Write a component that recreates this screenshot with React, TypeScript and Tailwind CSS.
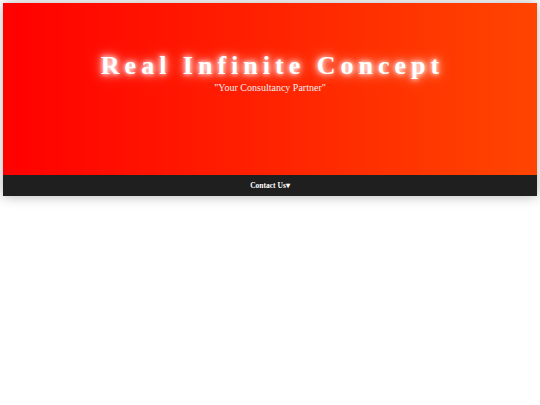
import React from "react";

export default function App() {
  return (
    <div className="min-h-[405px] w-[540px] bg-white p-[3px]">
      <div className="shadow-[0_0_12px_rgba(0,0,0,0.3)]">
        <header className="flex h-[172px] flex-col items-center bg-[linear-gradient(to_right,#ff0000,#ff4500)] pt-[48px] text-white">
          <h1 className="pl-[5px] font-['Liberation_Serif',serif] text-[26px] leading-[30px] font-bold tracking-[5px] [text-shadow:0_0_5px_#fff,0_0_10px_rgba(255,255,255,0.8),0_0_16px_rgba(255,255,255,0.5)]">
            Real Infinite Concept
          </h1>
          <p className="font-['Liberation_Serif',serif] text-[10px] leading-[14px] text-[#f6eeee]">"Your Consultancy Partner"</p>
        </header>
        <nav className="flex h-[21px] items-center justify-center bg-[#1f1f1f] text-white">
          <span className="font-['Liberation_Serif',serif] text-[7.5px] font-bold">Contact Us▾</span>
        </nav>
      </div>
    </div>
  );
}
